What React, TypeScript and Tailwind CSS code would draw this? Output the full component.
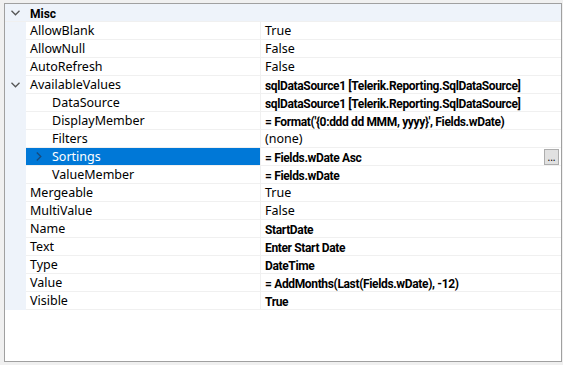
import React from "react";

type Row = {
  name: string;
  value: string;
  bold?: boolean;
  indent?: boolean;
  expand?: "down" | "right";
  selected?: boolean;
  button?: boolean;
};

const rows: Row[] = [
  { name: "AllowBlank", value: "True" },
  { name: "AllowNull", value: "False" },
  { name: "AutoRefresh", value: "False" },
  { name: "AvailableValues", value: "sqlDataSource1 [Telerik.Reporting.SqlDataSource]", bold: true, expand: "down" },
  { name: "DataSource", value: "sqlDataSource1 [Telerik.Reporting.SqlDataSource]", bold: true, indent: true },
  { name: "DisplayMember", value: "= Format('{0:ddd dd MMM, yyyy}', Fields.wDate)", bold: true, indent: true },
  { name: "Filters", value: "(none)", indent: true },
  { name: "Sortings", value: "= Fields.wDate Asc", bold: true, indent: true, expand: "right", selected: true, button: true },
  { name: "ValueMember", value: "= Fields.wDate", bold: true, indent: true },
  { name: "Mergeable", value: "True" },
  { name: "MultiValue", value: "False" },
  { name: "Name", value: "StartDate", bold: true },
  { name: "Text", value: "Enter Start Date", bold: true },
  { name: "Type", value: "DateTime", bold: true },
  { name: "Value", value: "= AddMonths(Last(Fields.wDate), -12)", bold: true },
  { name: "Visible", value: "True", bold: true },
];

const boldFont = { fontFamily: "Roboto, sans-serif" };

function ChevronDown() {
  return (
    <svg width="9" height="6" viewBox="0 0 9 6" className="text-[#555]">
      <path d="M0.5 0.8 L4.5 4.8 L8.5 0.8" fill="none" stroke="currentColor" strokeWidth="1.3" />
    </svg>
  );
}

function ChevronRight({ className }: { className?: string }) {
  return (
    <svg width="6" height="9" viewBox="0 0 6 9" className={className}>
      <path d="M0.8 0.5 L4.8 4.5 L0.8 8.5" fill="none" stroke="currentColor" strokeWidth="1.3" />
    </svg>
  );
}

export default function App() {
  return (
    <div
      className="w-[563px] h-[365px] bg-[#f0f0f0] pt-[3px] pl-[4px] text-[12.5px] text-black"
      style={{ fontFamily: '"Noto Sans", "Segoe UI", sans-serif' }}
    >
      <div className="w-[558px] h-[359px] border border-[#a0a0a0] bg-white flex flex-col">
        {/* Category header */}
        <div className="h-[18px] flex items-center bg-[#eef3fa] border-b border-[#f0f0f0] shrink-0">
          <div className="w-[21px] flex justify-center items-center">
            <ChevronDown />
          </div>
          <span className="pl-[4px] mt-[2px] font-bold text-[12px] leading-none" style={boldFont}>
            Misc
          </span>
        </div>

        {rows.map((r) => (
          <div key={r.name} className="h-[18px] flex shrink-0">
            <div className="w-[21px] bg-[#eef3fa] flex justify-center items-center shrink-0">
              {r.expand === "down" && <ChevronDown />}
            </div>
            <div
              className={`w-[235px] shrink-0 flex items-center border-b border-r border-[#f0f0f0] ${
                r.selected ? "bg-[#0078d7] text-white" : ""
              }`}
            >
              {r.indent ? (
                <div className="w-[26px] flex justify-center items-center shrink-0">
                  {r.expand === "right" && <ChevronRight className="text-[#17497a]" />}
                </div>
              ) : (
                <div className="w-[4px] shrink-0" />
              )}
              <span className="mt-[2px] leading-none whitespace-nowrap">{r.name}</span>
            </div>
            <div className="flex-1 flex items-center justify-between border-b border-[#f0f0f0] pl-[4px] pr-[2px]">
              {r.bold ? (
                <span
                  className="mt-[2px] leading-none whitespace-nowrap font-bold text-[12px] tracking-[-0.35px]"
                  style={boldFont}
                >
                  {r.value}
                </span>
              ) : (
                <span className="mt-[2px] leading-none whitespace-nowrap">{r.value}</span>
              )}
              {r.button && (
                <div className="w-[15px] h-[16px] border border-[#adadad] bg-[#e1e1e1] flex items-end justify-center pb-[2px] text-[10px] leading-none">
                  ...
                </div>
              )}
            </div>
          </div>
        ))}
      </div>
    </div>
  );
}
